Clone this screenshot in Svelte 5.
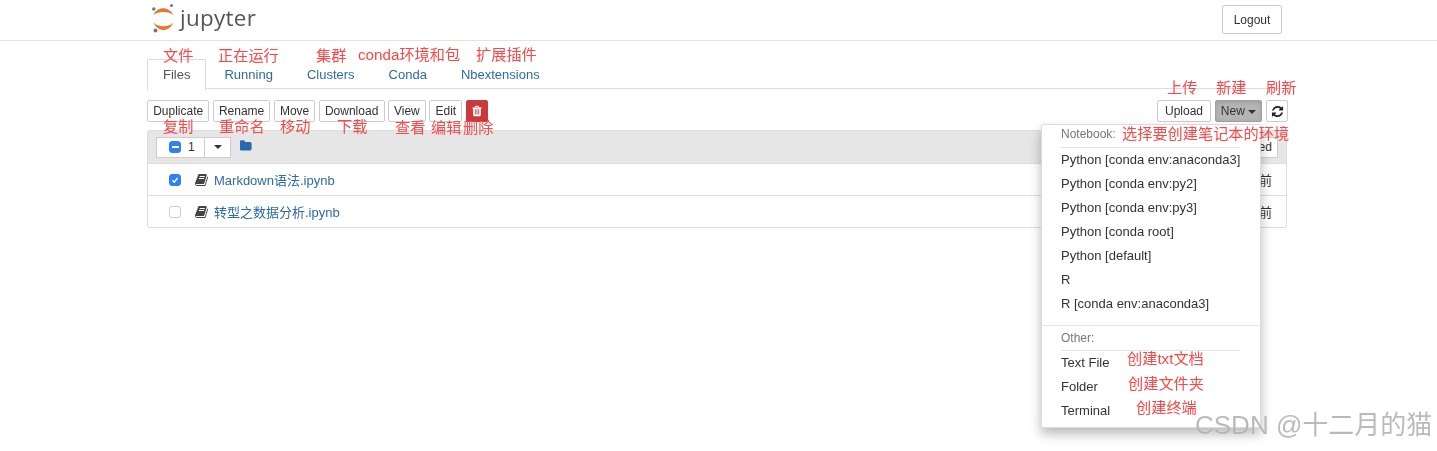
<script lang="ts">
  const BOOK = 'M1639 478q40 57 18 129l-275 906q-19 64-76.5 107.5t-122.5 43.5h-923q-77 0-148.5-53.5t-99.5-131.5q-24-67-2-127 0-4 3-27t4-37q1-8-3-21.5t-3-19.5q2-11 8-21t16.5-23.5 16.5-23.5q23-38 45-91.5t30-91.5q3-10 .5-30t-.5-28q3-11 17-28t17-23q21-36 42-92t25-90q1-9-2.5-32t.5-28q4-13 22-30.5t22-22.5q19-26 42.5-84.5t27.5-96.5q1-8-3-25.5t-2-26.5q2-8 9-18t18-23 17-21q8-12 16.5-30.5t15-35 16-36 19.5-32 26.5-23.5 36-11.5 47.5 5.5l-1 3q38-9 51-9h761q74 0 114 56t18 130l-274 906q-36 119-71.5 153.5t-128.5 34.5h-869q-27 0-38 15-11 16-1 43 24 70 144 70h923q29 0 56-15.5t35-41.5l300-987q7-22 5-57 38 15 59 43zm-1064 2q-4 13 2 22.5t20 9.5h608q13 0 25.5-9.5t16.5-22.5l21-64q4-13-2-22.5t-20-9.5h-608q-13 0-25.5 9.5t-16.5 22.5zm-83 256q-4 13 2 22.5t20 9.5h608q13 0 25.5-9.5t16.5-22.5l21-64q4-13-2-22.5t-20-9.5h-608q-13 0-25.5 9.5t-16.5 22.5z';
  const REFRESH = 'M1639 1056q0 5-1 7-64 268-268 434.5t-478 166.5q-146 0-282.5-55t-243.5-157l-129 129q-19 19-45 19t-45-19-19-45v-448q0-26 19-45t45-19h448q26 0 45 19t19 45-19 45l-137 137q71 66 161 102t187 36q134 0 250-65t186-179q11-17 53-117 8-23 30-23h192q13 0 22.5 9.5t9.5 22.5zm25-800v448q0 26-19 45t-45 19h-448q-26 0-45-19t-19-45 19-45l138-138q-148-137-349-137-134 0-250 65t-186 179q-11 17-53 117-8 23-30 23h-199q-13 0-22.5-9.5t-9.5-22.5v-7q65-268 270-434.5t480-166.5q146 0 284 55.5t245 156.5l130-129q19-19 45-19t45 19 19 45z';
  const TRASH = 'M704 1376v-704q0-14-9-23t-23-9h-64q-14 0-23 9t-9 23v704q0 14 9 23t23 9h64q14 0 23-9t9-23zm256 0v-704q0-14-9-23t-23-9h-64q-14 0-23 9t-9 23v704q0 14 9 23t23 9h64q14 0 23-9t9-23zm256 0v-704q0-14-9-23t-23-9h-64q-14 0-23 9t-9 23v704q0 14 9 23t23 9h64q14 0 23-9t9-23zm-544-992h448l-48-117q-7-9-17-11h-317q-10 2-17 11zm928 32v64q0 14-9 23t-23 9h-96v948q0 83-47 143.5t-113 60.5h-832q-66 0-113-58.5t-47-141.5v-952h-96q-14 0-23-9t-9-23v-64q0-14 9-23t23-9h309l70-167q15-37 54-63t79-26h320q40 0 79 26t54 63l70 167h309q14 0 23 9t9 23z';
  const FOLDER = 'M1600 648v704q0 92-66 158t-158 66h-1216q-92 0-158-66t-66-158v-960q0-92 66-158t158-66h320q92 0 158 66t66 158v32h672q92 0 158 66t66 158z';

  const tabs = ['Files', 'Running', 'Clusters', 'Conda', 'Nbextensions'];
  const actions = ['Duplicate', 'Rename', 'Move', 'Download', 'View', 'Edit'];
  const files = [
    { name: 'Markdown语法.ipynb', checked: true },
    { name: '转型之数据分析.ipynb', checked: false }
  ];
  const notebooks = [
    'Python [conda env:anaconda3]',
    'Python [conda env:py2]',
    'Python [conda env:py3]',
    'Python [conda root]',
    'Python [default]',
    'R',
    'R [conda env:anaconda3]'
  ];
  const others = ['Text File', 'Folder', 'Terminal'];

  // red annotations drawn over the screenshot
  const notes = [
    { x: 163, y: 56, text: '文件' },
    { x: 218, y: 56, text: '正在运行' },
    { x: 316, y: 56, text: '集群' },
    { x: 358, y: 55, text: 'conda环境和包' },
    { x: 476, y: 55, text: '扩展插件' },
    { x: 163, y: 127, text: '复制' },
    { x: 219, y: 127, text: '重命名' },
    { x: 280, y: 127, text: '移动' },
    { x: 337, y: 127, text: '下载' },
    { x: 395, y: 128, text: '查看' },
    { x: 431, y: 128, text: '编辑' },
    { x: 463, y: 128, text: '删除' },
    { x: 1167, y: 88, text: '上传' },
    { x: 1216, y: 88, text: '新建' },
    { x: 1266, y: 88, text: '刷新' },
    { x: 1122, y: 134, text: '选择要创建笔记本的环境' },
    { x: 1127, y: 359, text: '创建txt文档' },
    { x: 1128, y: 384, text: '创建文件夹' },
    { x: 1136, y: 408, text: '创建终端' }
  ];
</script>

<div class="page">
  <header class="top">
    <div class="wrap top-row">
      <div class="logo">
        <svg width="24" height="30" viewBox="0 0 24 30">
          <path d="M1.5 12 C5 3 17 3 21.5 12 C17 8 6 8 1.5 12 Z" fill="#e8772e" />
          <path d="M1.5 19.5 C6 29.5 17 29.5 21.5 19.5 C17 24.5 6 24.5 1.5 19.5 Z" fill="#e8772e" />
          <circle cx="1.8" cy="6" r="1.7" fill="#767677" />
          <circle cx="19.5" cy="2.5" r="1.5" fill="#767677" />
          <circle cx="3.5" cy="27.5" r="2" fill="#767677" />
        </svg>
        <span class="logo-text">jupyter</span>
      </div>
      <button class="btn logout">Logout</button>
    </div>
  </header>

  <main class="wrap">
    <ul class="tabs">
      {#each tabs as tab, i}
        <li class:active={i === 0}>{tab}</li>
      {/each}
    </ul>

    <div class="toolbar">
      <div class="actions">
        {#each actions as action}
          <button class="btn">{action}</button>
        {/each}
        <button class="btn danger" aria-label="Delete">
          <svg width="12" height="12" viewBox="0 0 1792 1792"><path d={TRASH} fill="#fff" /></svg>
        </button>
      </div>
      <div class="actions right">
        <button class="btn upload">Upload</button>
        <button class="btn new">New <i class="caret"></i></button>
        <button class="btn icon" aria-label="Refresh">
          <svg width="13" height="13" viewBox="0 0 1792 1792"><path d={REFRESH} fill="#222" /></svg>
        </button>
      </div>
    </div>

    <section class="list">
      <div class="list-head">
        <div class="select-group">
          <span class="select-main"><i class="box minus"></i><span>1</span></span>
          <span class="select-caret"><i class="caret dark"></i></span>
        </div>
        <svg class="folder" width="13" height="13" viewBox="0 0 1792 1792"><path d={FOLDER} fill="#2a69ac" /></svg>
        <button class="btn sort">Last Modified</button>
      </div>
      {#each files as file}
        <div class="row">
          {#if file.checked}
            <i class="box checked">
              <svg width="12" height="12" viewBox="0 0 12 12"><path d="M3 6.2 L5.2 8.6 L9.2 3.4" fill="none" stroke="#fff" stroke-width="1.7" /></svg>
            </i>
          {:else}
            <i class="box"></i>
          {/if}
          <svg class="book" width="14" height="14" viewBox="0 0 1792 1792"><path d={BOOK} fill="#444" /></svg>
          <span class="name">{file.name}</span>
          <span class="time">2 天前</span>
        </div>
      {/each}
    </section>
  </main>

  <div class="menu">
    <div class="menu-head">Notebook:</div>
    <div class="menu-line"></div>
    {#each notebooks as item}
      <div class="menu-item">{item}</div>
    {/each}
    <div class="menu-divider"></div>
    <div class="menu-head other">Other:</div>
    <div class="menu-line"></div>
    {#each others as item}
      <div class="menu-item">{item}</div>
    {/each}
  </div>

  {#each notes as note}
    <span class="note" style="left: {note.x}px; top: {note.y}px">{note.text}</span>
  {/each}
  <span class="mark">CSDN @十二月的猫</span>
</div>

<style>
  :global(body) {
    margin: 0;
    background: #fff;
  }

  .page {
    position: relative;
    width: 1437px;
    height: 451px;
    overflow: hidden;
    font-family: "Liberation Sans", "Noto Sans CJK SC", sans-serif;
    font-size: 13px;
    color: #333;
    filter: blur(0.35px);
  }

  .wrap {
    width: 1141px;
    margin-left: 147px;
  }

  .top {
    height: 40px;
    border-bottom: 1px solid #e3e3e3;
  }

  .top-row {
    display: flex;
    justify-content: space-between;
    align-items: flex-start;
  }

  .logo {
    display: flex;
    align-items: center;
    height: 35px;
    gap: 4px;
    padding-left: 5px;
  }

  .logo-text {
    font-family: "Open Sans", sans-serif;
    font-size: 22.4px;
    color: #555;
    letter-spacing: 0.3px;
  }

  .btn {
    font: inherit;
    font-size: 12px;
    line-height: 18px;
    height: 22px;
    padding: 0 5.2px;
    color: #333;
    background: #fff;
    border: 1px solid #ccc;
    border-radius: 2px;
    box-sizing: border-box;
  }

  .logout {
    height: 29px;
    width: 60px;
    margin: 5px 6px 0 0;
    padding: 0;
  }

  .tabs {
    list-style: none;
    display: flex;
    gap: 2px;
    margin: 18px 0 0;
    padding: 0;
    height: 29px;
    border-bottom: 1px solid #ddd;
  }

  .tabs li {
    padding: 6px 15px;
    height: 18px;
    line-height: 18px;
    border: 1px solid transparent;
    color: #2f6aa8;
  }

  .tabs li.active {
    color: #555;
    background: #fff;
    border-color: #ddd #ddd #fff;
  }

  .toolbar {
    display: flex;
    justify-content: space-between;
    margin-top: 11px;
  }

  .actions {
    display: flex;
    gap: 3.3px;
  }

  .actions.right {
    gap: 4px;
  }

  .upload {
    width: 54px;
    padding: 0;
  }

  .danger {
    width: 22px;
    padding: 0;
    background: #cb3a3a;
    border-color: #cb3a3a;
    display: flex;
    align-items: center;
    justify-content: center;
  }

  .new {
    width: 47px;
    padding: 0;
    background: #b5b5b5;
    border-color: #a0a0a0;
    box-shadow: inset 0 2px 4px rgba(0, 0, 0, 0.12);
  }

  .icon {
    width: 22px;
    padding: 0;
    display: flex;
    align-items: center;
    justify-content: center;
  }

  .caret {
    display: inline-block;
    border-top: 4px solid #333;
    border-left: 4px solid transparent;
    border-right: 4px solid transparent;
    vertical-align: middle;
  }

  .list {
    margin-top: 8px;
    border: 1px solid #ddd;
    border-radius: 2px;
    width: 1138px;
  }

  .list-head {
    display: flex;
    align-items: center;
    height: 32px;
    padding-left: 8px;
    background: #e6e6e6;
    border-bottom: 1px solid #ddd;
  }

  .select-group {
    display: flex;
    height: 21px;
    background: #fff;
    border: 1px solid #ccc;
    box-sizing: border-box;
    width: 75px;
  }

  .select-main {
    display: flex;
    align-items: center;
    gap: 7px;
    width: 48px;
    padding-left: 12px;
    box-sizing: border-box;
    border-right: 1px solid #ccc;
    font-size: 12px;
  }

  .select-caret {
    flex: 1;
    display: flex;
    align-items: center;
    justify-content: center;
  }

  .box {
    display: flex;
    align-items: center;
    justify-content: center;
    width: 12px;
    height: 12px;
    flex: none;
    border: 1px solid #ccc;
    border-radius: 3px;
    box-sizing: border-box;
    background: #fff;
  }

  .box.checked,
  .box.minus {
    background: #2f80f5;
    border-color: #2f80f5;
  }

  .box.minus::after {
    content: '';
    width: 7px;
    height: 2px;
    background: #fff;
  }

  .folder {
    margin: -3px 0 0 9px;
  }

  .sort {
    margin-left: auto;
    margin-right: 8px;
    height: 21px;
  }

  .row {
    display: flex;
    align-items: center;
    height: 31px;
    padding: 0 14px 0 21px;
  }

  .row + .row {
    border-top: 1px solid #ddd;
  }

  .book {
    margin-left: 14px;
  }

  .name {
    margin-left: 5px;
    color: #2f6aa8;
  }

  .time {
    margin-left: auto;
  }

  .menu {
    position: absolute;
    left: 1041px;
    top: 124px;
    width: 220px;
    height: 304px;
    box-sizing: border-box;
    background: #fff;
    border: 1px solid #dcdcdc;
    border-radius: 2px;
    box-shadow: 0 6px 12px rgba(0, 0, 0, 0.28);
  }

  .menu-head {
    height: 21px;
    line-height: 19px;
    padding-left: 19px;
    font-size: 12px;
    color: #777;
  }

  .menu-head.other {
    height: 23px;
    line-height: 24px;
  }

  .menu-line {
    height: 1px;
    margin: 1px 20px 0 19px;
    background: #e5e5e5;
  }

  .menu-item {
    height: 24px;
    line-height: 24px;
    padding-left: 19px;
    color: #333;
  }

  .menu-divider {
    height: 1px;
    margin-top: 9px;
    background: #e5e5e5;
  }

  .note {
    position: absolute;
    transform: translateY(-50%);
    font-size: 15.2px;
    line-height: 20px;
    white-space: nowrap;
    color: #ff4545;
  }

  .mark {
    position: absolute;
    left: 1195px;
    top: 408px;
    font-size: 26px;
    line-height: 34px;
    white-space: nowrap;
    color: rgba(130, 130, 130, 0.55);
    text-shadow: 0 0 1px rgba(255, 255, 255, 0.8);
  }
</style>
